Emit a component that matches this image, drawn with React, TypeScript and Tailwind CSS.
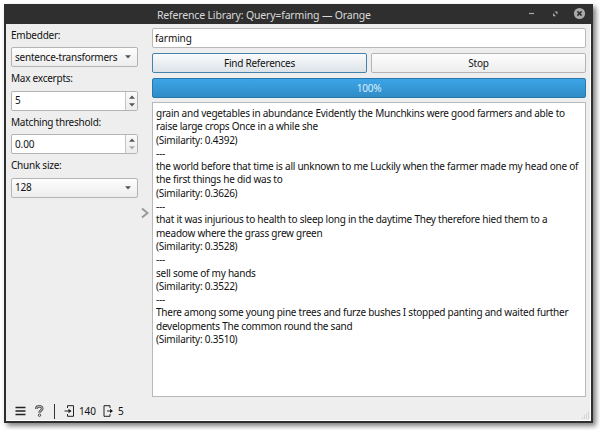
import React from "react";

const excerpts: string[] = [
  "grain and vegetables in abundance Evidently the Munchkins were good farmers and able to",
  "raise large crops Once in a while she",
  "(Similarity: 0.4392)",
  "---",
  "the world before that time is all unknown to me Luckily when the farmer made my head one of",
  "the first things he did was to",
  "(Similarity: 0.3626)",
  "---",
  "that it was injurious to health to sleep long in the daytime They therefore hied them to a",
  "meadow where the grass grew green",
  "(Similarity: 0.3528)",
  "---",
  "sell some of my hands",
  "(Similarity: 0.3522)",
  "---",
  "There among some young pine trees and furze bushes I stopped panting and waited further",
  "developments The common round the sand",
  "(Similarity: 0.3510)",
];

function Label({ children }: { children: React.ReactNode }) {
  return <div className="flex h-[23.5px] items-center whitespace-nowrap first:h-[23px]">{children}</div>;
}

function Combo({ value }: { value: string }) {
  return (
    <div className="flex h-5 items-center justify-between rounded-[2px] border border-[#b4b4b4] bg-linear-to-b from-[#fdfdfd] to-[#ededed] pr-[6px] pl-[3px] whitespace-nowrap">
      <span className="pt-px">{value}</span>
      <svg width="6" height="4" viewBox="0 0 6 4"><path d="M0 .3h6L3 3.6z" fill="#555" /></svg>
    </div>
  );
}

function Spin({ value, atMinimum }: { value: string; atMinimum?: boolean }) {
  return (
    <div className="flex h-5 rounded-[2px] border border-[#b4b4b4] bg-white">
      <div className="flex flex-1 items-center pt-px pl-[3px] tracking-[-0.1px]">{value}</div>
      <div className="flex w-[12px] flex-col items-center justify-center gap-[4px] border-l border-[#c4c4c4] bg-linear-to-b from-[#fafafa] to-[#ededed]">
        <svg width="6" height="4" viewBox="0 0 6 4"><path d="M0 3.7h6L3 .4z" fill="#555" /></svg>
        <svg width="6" height="4" viewBox="0 0 6 4"><path d="M0 .3h6L3 3.6z" fill={atMinimum ? "#aaa" : "#555"} /></svg>
      </div>
    </div>
  );
}

function TitleBar() {
  return (
    <div className="flex h-5 shrink-0 items-center bg-[#2f2f2f]">
      <div className="flex-1 pt-[3px] pl-[153px] text-[10.5px] tracking-[-0.17px] whitespace-nowrap text-[#dadada]">
        Reference Library: Query=farming — Orange
      </div>
      <svg className="mr-[6px]" width="60" height="14" viewBox="0 0 60 14">
        <path d="M2 6.5h5" stroke="#aaa" strokeWidth="1.2" />
        <path d="M27.5 4.5h3v3zM26 6v3.2h3z" fill="#aaa" />
        <circle cx="52.5" cy="6.5" r="5.6" fill="#aaa" />
        <path d="M50.4 4.4l4.2 4.2m0-4.2l-4.2 4.2" stroke="#2f2f2f" strokeWidth="1.5" />
      </svg>
    </div>
  );
}

function StatusBar() {
  return (
    <div className="flex h-[18px] items-center pl-[9px] tracking-[-0.1px]">
      <svg width="11" height="10" viewBox="0 0 11 10"><path d="M.5 1.5h10m-10 3.5h10m-10 3.5h10" stroke="#222" strokeWidth="1.5" /></svg>
      <svg className="ml-[9px]" width="9" height="12" viewBox="0 0 9 12" fill="none">
        <path d="M1.3 4C1.3.5 7.2.6 7.2 3.5c0 2-2.6 2-2.6 4.3" stroke="#555" strokeWidth="2.7" />
        <path d="M1.3 3.8C1.3.5 7.2.6 7.2 3.5c0 2-2.6 2-2.6 4" stroke="#ddd" strokeWidth=".8" />
        <circle cx="4.5" cy="10.2" r="1.2" stroke="#444" strokeWidth="1" />
      </svg>
      <div className="ml-[10px] h-[15px] w-px bg-[#333]" />
      <svg className="ml-[9px]" width="12" height="12" viewBox="0 0 12 12" fill="none">
        <path d="M3.5 3V.7h6v10.6h-6V9M.5 6h6" stroke="#222" />
        <path d="M4.5 3.7L7.5 6l-3 2.3z" fill="#222" />
      </svg>
      <span className="ml-[3px] pt-px">140</span>
      <svg className="ml-[7px]" width="12" height="12" viewBox="0 0 12 12" fill="none">
        <path d="M7 3V.7H1v10.6h6V9M4 6h5" stroke="#222" />
        <path d="M7 3.7l3 2.3-3 2.3z" fill="#222" />
      </svg>
      <span className="ml-[3px] pt-px">5</span>
    </div>
  );
}

export default function App() {
  return (
    <div className="h-[430px] w-[600px] overflow-hidden bg-white pt-1 pl-1 font-['Noto_Sans',sans-serif] text-[10px] leading-[13.3px] tracking-[-0.24px] text-[#111]">
      <div className="flex h-[419px] w-[589px] flex-col bg-[#2f2f2f] shadow-[3px_3px_5px_rgba(0,0,0,0.5)]">
        <TitleBar />
        <div className="mr-[2px] mb-[2px] ml-[2px] flex min-h-0 flex-1 flex-col border-r border-b border-white bg-[#eeeeee]">
          <div className="flex h-[373px] shrink-0 pr-[4px]">
            <div className="w-[132px] shrink-0 pl-[5px]">
              <Label>Embedder:</Label>
              <Combo value="sentence-transformers" />
              <Label>Max excerpts:</Label>
              <Spin value="5" />
              <Label>Matching threshold:</Label>
              <Spin value="0.00" atMinimum />
              <Label>Chunk size:</Label>
              <Combo value="128" />
            </div>
            <div className="flex w-[14px] shrink-0 items-center justify-center pt-[4px]">
              <svg width="8" height="12" viewBox="0 0 8 12"><path d="M1 1.5L6.5 6 1 10.5" fill="none" stroke="#999" strokeWidth="2" /></svg>
            </div>
            <div className="flex min-w-0 flex-1 flex-col pt-1">
              <div className="flex h-5 shrink-0 items-center rounded-[2px] border border-[#b9b9b9] bg-white pt-px pl-[2px] tracking-[-0.1px]">farming</div>
              <div className="mt-[5px] flex h-5 shrink-0 gap-1">
                <div className="flex flex-1 items-center justify-center rounded-[2px] border border-[#4383ad] bg-linear-to-b from-[#fafbfc] to-[#dce3e8] pt-px">Find References</div>
                <div className="flex flex-1 items-center justify-center rounded-[2px] border border-[#b4b4b4] bg-linear-to-b from-[#fdfdfd] to-[#ededed] pt-px">Stop</div>
              </div>
              <div className="mt-[5px] flex h-5 shrink-0 items-center justify-center rounded-[2px] border border-[#2878aa] bg-linear-to-b from-[#3ca5e8] to-[#308cc6] pt-px text-[#dceefa]">100%</div>
              <div className="mt-1 min-h-0 flex-1 border border-[#b9b9b9] bg-white pt-[4px] pl-[3px]">
                {excerpts.map((line, i) => (
                  <div key={i} className="whitespace-nowrap">{line}</div>
                ))}
              </div>
            </div>
          </div>
          <div className="flex flex-1 items-end justify-between">
            <StatusBar />
            <svg width="9" height="9" viewBox="0 0 9 9"><path d="M7 1h1M5 3h1m1 0h1M3 5h1m1 0h1m1 0h1M1 7h1m1 0h1m1 0h1m1 0h1" stroke="#bbb" /></svg>
          </div>
        </div>
      </div>
    </div>
  );
}
